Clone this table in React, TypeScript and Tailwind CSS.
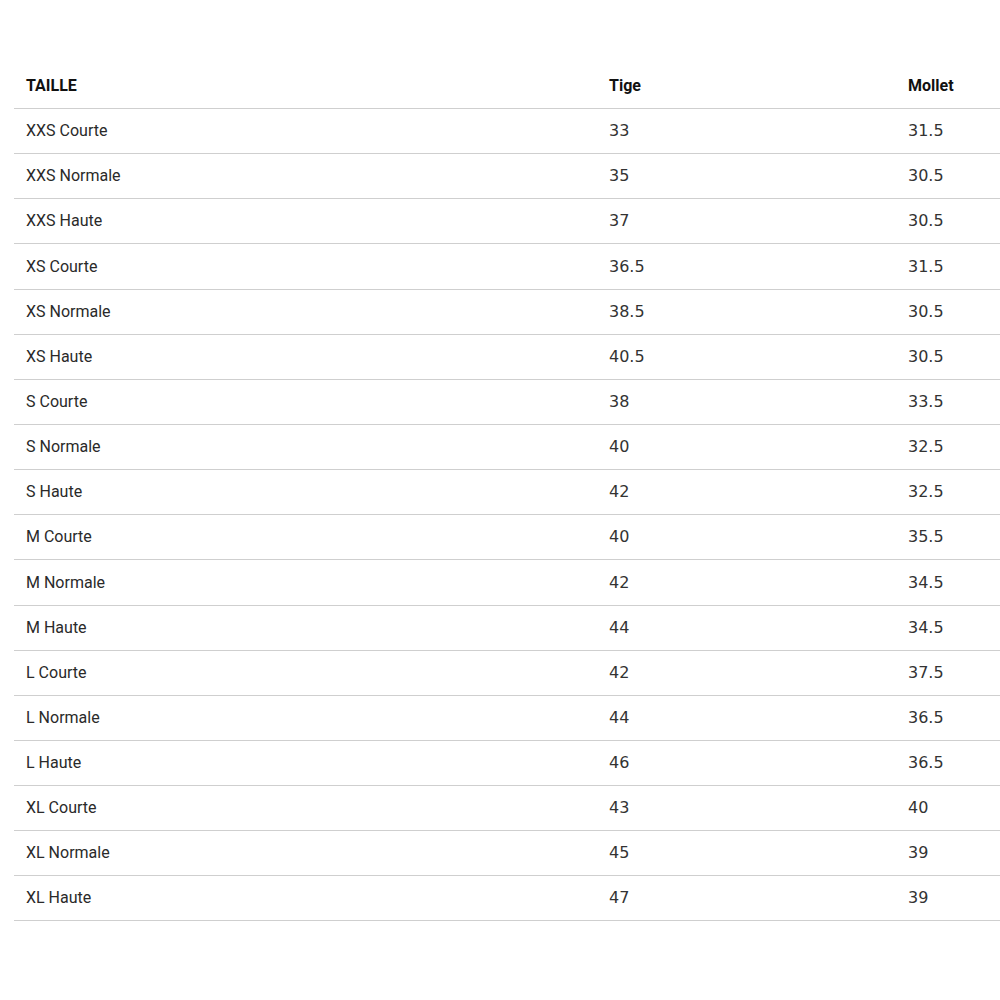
const rows: [string, string, string][] = [
  ["XXS Courte", "33", "31.5"],
  ["XXS Normale", "35", "30.5"],
  ["XXS Haute", "37", "30.5"],
  ["XS Courte", "36.5", "31.5"],
  ["XS Normale", "38.5", "30.5"],
  ["XS Haute", "40.5", "30.5"],
  ["S Courte", "38", "33.5"],
  ["S Normale", "40", "32.5"],
  ["S Haute", "42", "32.5"],
  ["M Courte", "40", "35.5"],
  ["M Normale", "42", "34.5"],
  ["M Haute", "44", "34.5"],
  ["L Courte", "42", "37.5"],
  ["L Normale", "44", "36.5"],
  ["L Haute", "46", "36.5"],
  ["XL Courte", "43", "40"],
  ["XL Normale", "45", "39"],
  ["XL Haute", "47", "39"],
];

export default function App() {
  return (
    <div className="w-[1000px] h-[1000px] bg-white overflow-hidden pt-[63px] pl-[14px]">
      <div className="w-[986px]">
        <div className="grid grid-cols-[583px_299px_1fr] h-[46px] items-center border-b border-[#cfcfcf] font-['Roboto',sans-serif] font-bold text-[16px] text-[#111]">
          <div className="pl-3">TAILLE</div>
          <div className="pl-3">Tige</div>
          <div className="pl-3">Mollet</div>
        </div>
        {rows.map(([name, tige, mollet], i) => (
          <div
            key={name}
            className={`grid grid-cols-[583px_299px_1fr] items-center border-b border-[#cfcfcf] text-[#2a2a2a] ${i === 3 || i === 10 ? "h-[46px]" : "h-[45px]"}`}
          >
            <div className="pl-3 font-['Roboto',sans-serif] text-[16px]">{name}</div>
            <div className="pl-3 font-['DejaVu_Sans',sans-serif] text-[16px] text-[#333]">{tige}</div>
            <div className="pl-3 font-['DejaVu_Sans',sans-serif] text-[16px] text-[#333]">{mollet}</div>
          </div>
        ))}
      </div>
    </div>
  );
}
